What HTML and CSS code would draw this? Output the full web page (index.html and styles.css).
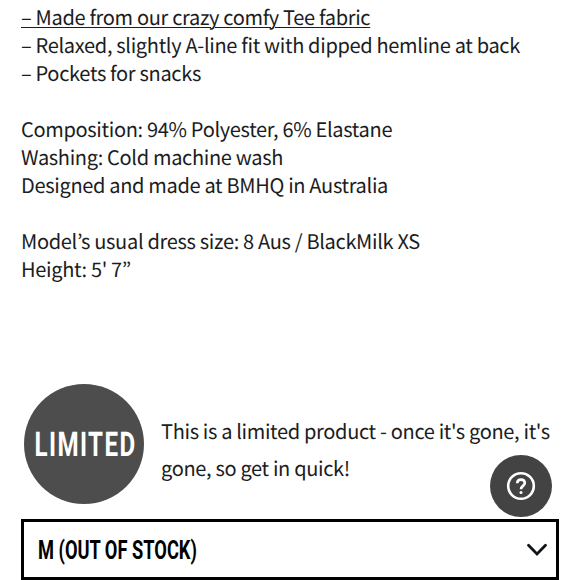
FILE: index.html
```
<!DOCTYPE html>
<html lang="en">
  <head>
    <meta charset="UTF-8" />
    <meta name="viewport" content="width=device-width, initial-scale=1.0" />
    <title>Product Details</title>
    <link rel="stylesheet" href="styles.css">
  </head>
  <body>
    <div class="description">
      <p>
        <a class="fabric-link" href="#">– Made from our crazy comfy Tee fabric</a><br />
        – Relaxed, slightly A-line fit with dipped hemline at back<br />
        – Pockets for snacks
      </p>
      <p>
        Composition: 94% Polyester, 6% Elastane<br />
        Washing: Cold machine wash<br />
        Designed and made at BMHQ in Australia
      </p>
      <p>
        Model’s usual dress size: 8 Aus / BlackMilk XS<br />
        Height: 5' 7”
      </p>
    </div>

    <div class="limited">
      <div class="limited-badge"><span>LIMITED</span></div>
      <p class="limited-text">This is a limited product - once it's gone, it's<br />gone, so get in quick!</p>
    </div>

    <button class="size-select" type="button">
      <span class="size-label">M (OUT OF STOCK)</span>
      <svg class="chevron" width="22" height="14" viewBox="0 0 22 14">
        <path d="M2.5 2.3l8.5 8.6 8.5-8.6" />
      </svg>
    </button>

    <a class="help-button" href="#" aria-label="Help">
      <svg width="30" height="30" viewBox="0 0 30 30">
        <circle class="ring" cx="15" cy="15" r="12.8" />
        <path class="hook" d="M11.2 12.2c.1-2.2 1.6-3.6 3.8-3.6s3.8 1.4 3.8 3.4c0 2.9-3.8 2.9-3.8 6.2" />
        <circle class="dot" cx="15" cy="21.6" r="1.5" />
      </svg>
    </a>
  </body>
</html>
```

FILE: styles.css
```
body {
  margin: 0;
  height: 580px;
  overflow: hidden;
  background-color: #fff;
  color: #1b1d22;
  font-family: "Noto Sans CJK KR", "Noto Sans", sans-serif;
  text-rendering: geometricPrecision;
}
.description {
  height: 379px;
  padding: 3px 21px 0;
  box-sizing: border-box;
}
.description p {
  margin: 0 0 28px;
  font-size: 20px;
  letter-spacing: -0.32px;
  line-height: 28px;
  white-space: nowrap;
}
.fabric-link {
  color: inherit;
  text-decoration: underline;
  text-decoration-thickness: 1px;
  text-underline-offset: 2px;
}
.limited {
  display: flex;
  height: 140px;
  padding-left: 24px;
}
.limited-badge {
  display: flex;
  flex: none;
  align-items: center;
  justify-content: center;
  width: 120px;
  height: 120px;
  margin-top: 5px;
  border-radius: 50%;
  background-color: #4d4d4d;
}
.limited-badge span {
  padding: 2px 0 0 3px;
  color: #fff;
  font-family: Roboto, sans-serif;
  font-size: 34px;
  font-weight: 700;
  letter-spacing: 2px;
  transform: scaleX(0.71);
}
.limited-text {
  margin: 33px 0 0 17px;
  font-size: 20px;
  letter-spacing: -0.33px;
  line-height: 37px;
  white-space: nowrap;
}
.size-select {
  display: flex;
  align-items: center;
  justify-content: space-between;
  width: 538px;
  height: 61px;
  margin: 0 0 0 21px;
  padding: 0 8px 0 14px;
  border: 3px solid #000;
  border-radius: 0;
  background-color: #fff;
  cursor: pointer;
}
.size-label {
  padding-top: 2px;
  color: #000;
  font-family: Roboto, sans-serif;
  font-size: 25px;
  font-weight: 700;
  transform: scaleX(0.73);
  transform-origin: left center;
}
.chevron {
  fill: none;
  stroke: #111518;
  stroke-width: 2.8;
  stroke-linecap: round;
}
.help-button {
  position: absolute;
  top: 455px;
  left: 490px;
  display: flex;
  align-items: center;
  justify-content: center;
  width: 62px;
  height: 62px;
  border-radius: 50%;
  background-color: #434343;
}
.help-button .ring,
.help-button .hook {
  fill: none;
  stroke: #fff;
  stroke-width: 2.6;
}
.help-button .dot {
  fill: #fff;
}
```
